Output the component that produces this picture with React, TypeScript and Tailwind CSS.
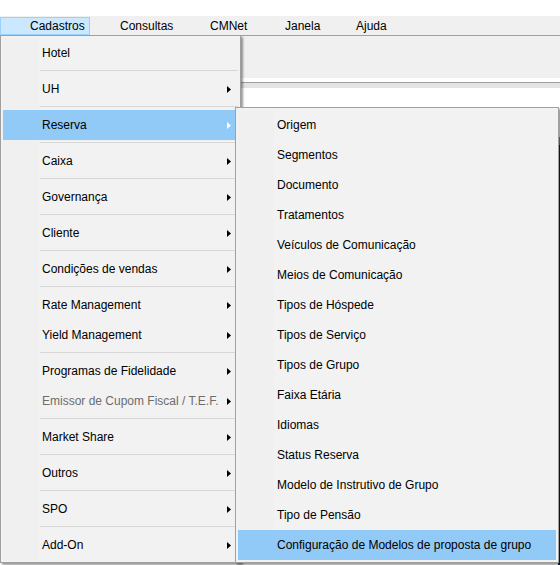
import React from "react";

type Item = { label: string; sub?: boolean; active?: boolean; disabled?: boolean } | "sep";

const mainItems: Item[] = [
  { label: "Hotel" },
  "sep",
  { label: "UH", sub: true },
  "sep",
  { label: "Reserva", sub: true, active: true },
  "sep",
  { label: "Caixa", sub: true },
  "sep",
  { label: "Governança", sub: true },
  "sep",
  { label: "Cliente", sub: true },
  "sep",
  { label: "Condições de vendas", sub: true },
  "sep",
  { label: "Rate Management", sub: true },
  { label: "Yield Management", sub: true },
  "sep",
  { label: "Programas de Fidelidade", sub: true },
  { label: "Emissor de Cupom Fiscal / T.E.F.", sub: true, disabled: true },
  "sep",
  { label: "Market Share", sub: true },
  "sep",
  { label: "Outros", sub: true },
  "sep",
  { label: "SPO", sub: true },
  "sep",
  { label: "Add-On", sub: true },
];

const reservaItems: Item[] = [
  { label: "Origem" },
  { label: "Segmentos" },
  { label: "Documento" },
  { label: "Tratamentos" },
  { label: "Veículos de Comunicação" },
  { label: "Meios de Comunicação" },
  { label: "Tipos de Hóspede" },
  { label: "Tipos de Serviço" },
  { label: "Tipos de Grupo" },
  { label: "Faixa Etária" },
  { label: "Idiomas" },
  { label: "Status Reserva" },
  { label: "Modelo de Instrutivo de Grupo" },
  { label: "Tipo de Pensão" },
  { label: "Configuração de Modelos de proposta de grupo", active: true },
];

function Arrow({ white }: { white?: boolean }) {
  return (
    <svg width="4" height="7" viewBox="0 0 4 7" className="shrink-0">
      <polygon points="0,0 4,3.5 0,7" fill={white ? "#ffffff" : "#000000"} />
    </svg>
  );
}

function MenuList({ items }: { items: Item[] }) {
  return (
    <div className="flex flex-col px-[2px] py-[2px]">
      {items.map((it, i) => {
        if (it === "sep") {
          return (
            <div key={i} className="flex h-[6px]">
              <div className="w-[36px] bg-[#f0f0f0]" />
              <div className="flex-1 pt-[2px] pl-[1px]">
                <div className="h-px bg-[#d7d7d7]" />
              </div>
            </div>
          );
        }
        return (
          <div
            key={i}
            className={
              "flex h-[30px] items-center " + (it.active ? "bg-[#91c9f7]" : "")
            }
          >
            <div className={"h-full w-[36px] " + (it.active ? "" : "bg-[#f0f0f0]")} />
            <span
              className={
                "ml-[3px] flex-1 whitespace-nowrap " +
                (it.disabled ? "text-[#6d6d6d]" : "text-black")
              }
            >
              {it.label}
            </span>
            {it.sub && (
              <div className="mr-[7px] flex items-center">
                <Arrow white={it.active} />
              </div>
            )}
          </div>
        );
      })}
    </div>
  );
}

export default function App() {
  return (
    <div className="relative flex h-[565px] w-[560px] flex-col overflow-hidden bg-white font-['Segoe_UI','Liberation_Sans',sans-serif] text-[12px] leading-none text-black">
      {/* title strip */}
      <div className="h-[16px] shrink-0 bg-white" />

      {/* menu bar */}
      <nav className="flex h-[19px] shrink-0 items-end bg-[#f0f0f0]">
        <div className="flex h-[18px] w-[90px] items-center border border-[#99d1ff] bg-[#cce8ff] pl-[29px]">
          Cadastros
        </div>
        <div className="flex h-[18px] w-[90px] items-center pl-[30px]">Consultas</div>
        <div className="flex h-[18px] w-[75px] items-center pl-[30px]">CMNet</div>
        <div className="flex h-[18px] w-[71px] items-center pl-[30px]">Janela</div>
        <div className="flex h-[18px] items-center pl-[30px]">Ajuda</div>
      </nav>

      {/* toolbar area */}
      <div className="h-[43px] shrink-0 border-t border-[#a0a0a0] bg-[#f0f0f0]" />
      <div className="h-[4px] shrink-0 bg-white" />
      <div className="h-px shrink-0 bg-[#a0a0a0]" />
      <div className="h-[5px] shrink-0 bg-[#e3e3e3]" />

      {/* workspace */}
      <div className="flex flex-1">
        <div className="flex-1 bg-white" />
        <div className="flex w-[2px] flex-col">
          <div className="h-[49px] bg-white" />
          <div className="h-[8px] bg-[#4a8fbf]" />
          <div className="flex-1 bg-[#0b1f5c]" />
        </div>
      </div>

      {/* Cadastros dropdown */}
      <div className="absolute left-0 top-[35px] w-[241px] border border-[#a0a0a0] bg-[#f2f2f2] shadow-[2px_2px_2px_rgba(0,0,0,0.4)]">
        <MenuList items={mainItems} />
      </div>

      {/* Reserva submenu */}
      <div className="absolute left-[235px] top-[107px] w-[324px] border border-[#a0a0a0] bg-[#f2f2f2] shadow-[2px_2px_2px_rgba(0,0,0,0.4)]">
        <MenuList items={reservaItems} />
      </div>
    </div>
  );
}
